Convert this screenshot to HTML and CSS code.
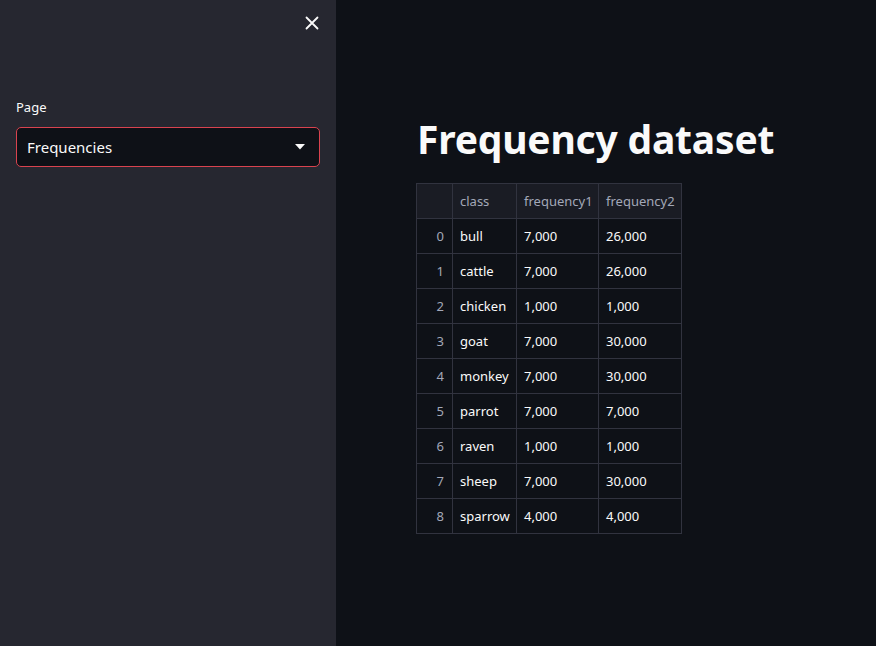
FILE: index.html
```html
<!DOCTYPE html>
<html>
<head>
<meta charset="utf-8">
<link rel="stylesheet" href="styles.css">
</head>
<body>
<div class="app">
  <aside class="sidebar">
    <div class="close-row">
      <svg class="close" width="14" height="14" viewBox="0 0 14 14"><path d="M1.5 1.5L12.5 12.5M12.5 1.5L1.5 12.5" stroke="#fafafa" stroke-width="1.8" stroke-linecap="round"/></svg>
    </div>
    <label class="label">Page</label>
    <div class="select">
      <span>Frequencies</span>
      <svg width="10" height="6" viewBox="0 0 10 6"><path d="M0 0H10L5 5.5Z" fill="#fafafa"/></svg>
    </div>
  </aside>
  <main class="main">
    <h1 class="title">Frequency dataset</h1>
    <table class="df">
      <colgroup><col class="k0"><col class="k1"><col class="k2"><col class="k3"></colgroup>
      <thead>
        <tr><th class="idx"></th><th>class</th><th>frequency1</th><th>frequency2</th></tr>
      </thead>
      <tbody>
        <tr><td class="idx">0</td><td>bull</td><td>7,000</td><td>26,000</td></tr>
        <tr><td class="idx">1</td><td>cattle</td><td>7,000</td><td>26,000</td></tr>
        <tr><td class="idx">2</td><td>chicken</td><td>1,000</td><td>1,000</td></tr>
        <tr><td class="idx">3</td><td>goat</td><td>7,000</td><td>30,000</td></tr>
        <tr><td class="idx">4</td><td>monkey</td><td>7,000</td><td>30,000</td></tr>
        <tr><td class="idx">5</td><td>parrot</td><td>7,000</td><td>7,000</td></tr>
        <tr><td class="idx">6</td><td>raven</td><td>1,000</td><td>1,000</td></tr>
        <tr><td class="idx">7</td><td>sheep</td><td>7,000</td><td>30,000</td></tr>
        <tr><td class="idx">8</td><td>sparrow</td><td>4,000</td><td>4,000</td></tr>
      </tbody>
    </table>
  </main>
</div>
</body>
</html>
```
FILE: styles.css
```css
html, body {
  margin: 0;
  padding: 0;
  height: 100%;
  background: #0e1117;
  font-family: "Noto Sans", sans-serif;
  color: #fafafa;
}
.app {
  display: flex;
  height: 646px;
}
.sidebar {
  width: 336px;
  flex: none;
  background: #262730;
  box-sizing: border-box;
  padding: 0 16px;
}
.close-row {
  display: flex;
  justify-content: flex-end;
  padding: 16px 1px 0 0;
  height: 44px;
  box-sizing: border-box;
}
.label {
  display: block;
  margin-top: 54px;
  font-size: 13px;
  line-height: 18px;
  color: #fafafa;
}
.select {
  margin-top: 11px;
  height: 40px;
  box-sizing: border-box;
  border: 1px solid #d9434f;
  border-radius: 5px;
  background: #0e1117;
  display: flex;
  align-items: center;
  justify-content: space-between;
  padding: 0 14px 0 10px;
  font-size: 15px;
}
.main {
  flex: 1;
  padding: 110px 0 0 81px;
  box-sizing: border-box;
}
.title {
  margin: 0;
  font-size: 39px;
  font-weight: 700;
  line-height: 58px;
  letter-spacing: -0.2px;
}
.df {
  margin-top: 15px;
  border-collapse: collapse;
  table-layout: fixed;
  width: 265px;
  font-size: 13px;
  margin-left: -1px;
}
.df col.k0 { width: 36px; }
.df col.k1 { width: 64px; }
.df col.k2 { width: 82px; }
.df col.k3 { width: 83px; }
.df th, .df td {
  border: 1px solid #31333f;
  height: 35px;
  padding: 0 7px 1px;
  text-align: left;
  font-weight: 400;
  box-sizing: border-box;
  white-space: nowrap;
  overflow: hidden;
}
.df th {
  background: #1a1c24;
  color: #a3a8b8;
}
.df td.idx {
  color: #a3a8b8;
  text-align: right;
  padding-right: 8px;
}
.df td { color: #fafafa; background: #0e1117; }
```
